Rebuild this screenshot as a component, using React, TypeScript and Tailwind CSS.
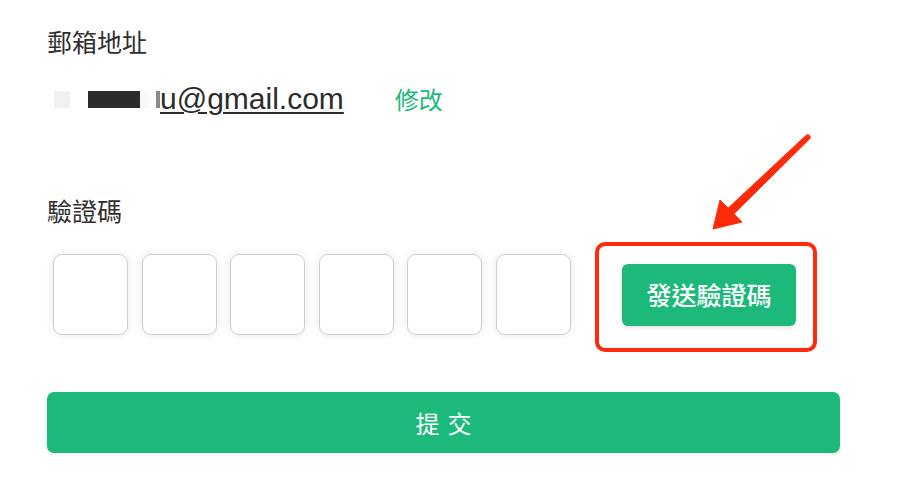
import React from 'react';

const cjk = { fontFamily: '"Noto Sans CJK TC", "Noto Sans", sans-serif' };
const latin = { fontFamily: '"Liberation Sans", Arial, sans-serif' };

export default function App() {
  return (
    <div className="relative w-[904px] h-[490px] bg-white overflow-hidden" style={cjk}>
      <div className="flex flex-col pl-[47px] pt-[23px]">
        {/* Email */}
        <div className="h-[36px] text-[25px] leading-[36px] text-[#2f2f2f]">郵箱地址</div>
        <div className="mt-[20px] h-[40px] flex items-center">
          <span className="ml-[7px] w-[16px] h-[17px] bg-[#f0f0f0]" />
          <span className="ml-[18px] w-[52px] h-[17px] bg-[#2b2b2b]" />
          <span className="w-[16px] h-[17px] bg-gradient-to-r from-[#f7f7f7] to-white" />
          <span className="w-[4px] h-[17px] bg-[#8a8a8a]" />
          <span
            className="text-[30px] leading-[40px] text-[#2b2b2b] underline underline-offset-[3px] decoration-[1.5px]"
            style={latin}
          >
            u@gmail.com
          </span>
          <button className="ml-[51px] text-[24px] leading-[40px] text-[#1fb97a]">修改</button>
        </div>

        {/* Code */}
        <div className="mt-[73px] h-[36px] text-[25px] leading-[36px] text-[#2f2f2f]">驗證碼</div>
        <div className="mt-[14px] flex items-start">
          <div className="ml-[6px] mt-[12px] flex gap-[13.6px]">
            {[0, 1, 2, 3, 4, 5].map((i) => (
              <input
                key={i}
                maxLength={1}
                className="w-[75px] h-[81px] rounded-[9px] border border-[#cfcfcf] bg-white shadow-[0_0_9px_rgba(0,0,0,0.09)] outline-none text-center text-[28px]"
              />
            ))}
          </div>
          <div className="ml-[24px] rounded-[10px] border-[4px] border-[#ff2a0a] pl-[23px] pt-[18px] pr-[17px] pb-[22px]">
            <button className="w-[174px] h-[62px] rounded-[6px] bg-[#1cb97a] text-white text-[25px] font-medium shadow-[0_2px_4px_rgba(0,0,0,0.12)]">
              發送驗證碼
            </button>
          </div>
        </div>

        {/* Submit */}
        <button className="mt-[40px] w-[793px] h-[61px] rounded-[7px] bg-[#1cb97a] text-white text-[24px] tracking-[8px] pl-[8px] shadow-[0_2px_3px_rgba(0,0,0,0.08)]">
          提交
        </button>
      </div>

      {/* Annotation arrow */}
      <svg className="absolute left-[700px] top-[130px]" width="120" height="110" viewBox="0 0 120 110">
        <path
          d="M106.3 5.2 L28.2 78.1 L20 70 L13 99 L42 92 L33.8 83.9 L109.7 8.8 A2.5 2.5 0 0 0 106.3 5.2 Z"
          fill="#ff2a0a"
          stroke="#ff2a0a"
          strokeWidth="1"
          strokeLinejoin="round"
        />
      </svg>
    </div>
  );
}
